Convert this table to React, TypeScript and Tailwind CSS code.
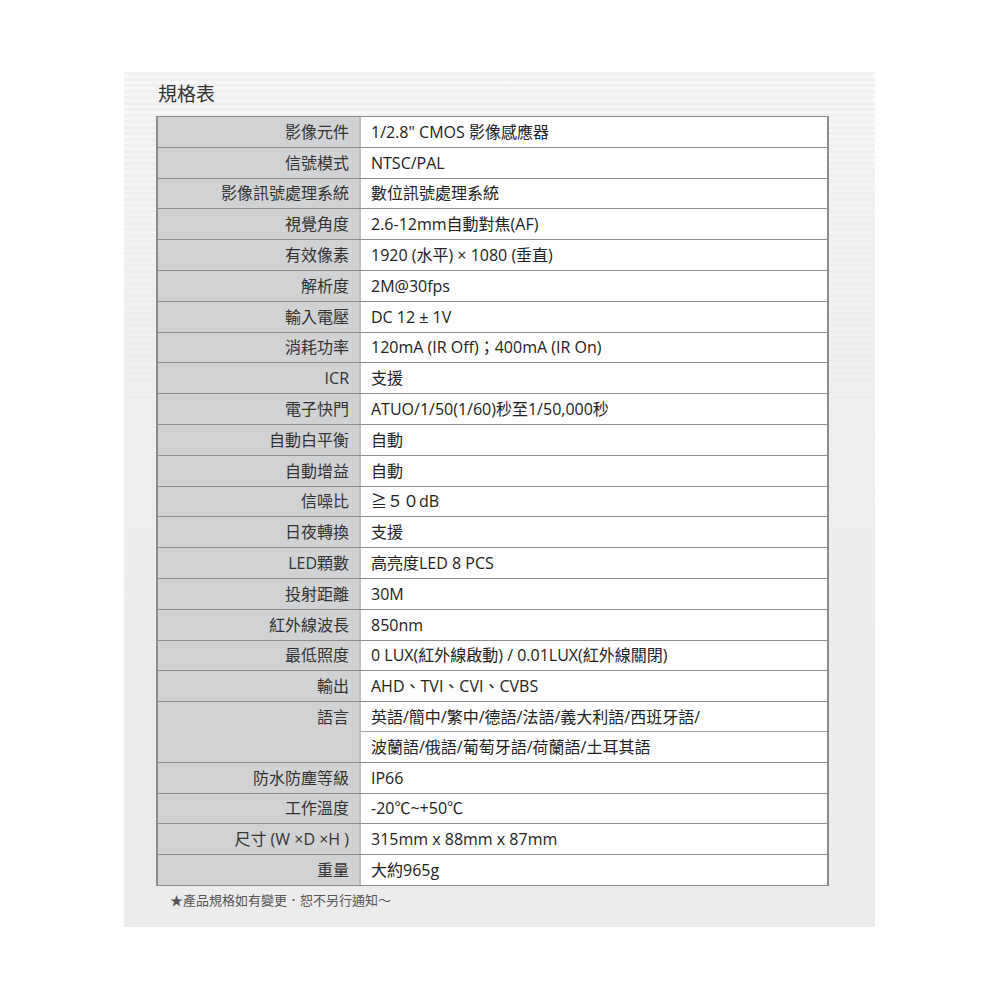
import React from "react";

type Row = { label: string; values: string[] };

const rows: Row[] = [
  { label: "影像元件", values: ['1/2.8" CMOS 影像感應器'] },
  { label: "信號模式", values: ["NTSC/PAL"] },
  { label: "影像訊號處理系統", values: ["數位訊號處理系統"] },
  { label: "視覺角度", values: ["2.6-12mm自動對焦(AF)"] },
  { label: "有效像素", values: ["1920 (水平) × 1080 (垂直)"] },
  { label: "解析度", values: ["2M@30fps"] },
  { label: "輸入電壓", values: ["DC 12 ± 1V"] },
  { label: "消耗功率", values: ["120mA (IR Off)；400mA (IR On)"] },
  { label: "ICR", values: ["支援"] },
  { label: "電子快門", values: ["ATUO/1/50(1/60)秒至1/50,000秒"] },
  { label: "自動白平衡", values: ["自動"] },
  { label: "自動增益", values: ["自動"] },
  { label: "信噪比", values: ["≧５０dB"] },
  { label: "日夜轉換", values: ["支援"] },
  { label: "LED顆數", values: ["高亮度LED 8 PCS"] },
  { label: "投射距離", values: ["30M"] },
  { label: "紅外線波長", values: ["850nm"] },
  { label: "最低照度", values: ["0 LUX(紅外線啟動) / 0.01LUX(紅外線關閉)"] },
  { label: "輸出", values: ["AHD、TVI、CVI、CVBS"] },
  {
    label: "語言",
    values: [
      "英語/簡中/繁中/德語/法語/義大利語/西班牙語/",
      "波蘭語/俄語/葡萄牙語/荷蘭語/土耳其語",
    ],
  },
  { label: "防水防塵等級", values: ["IP66"] },
  { label: "工作溫度", values: ["-20℃~+50℃"] },
  { label: "尺寸 (W ×D ×H )", values: ["315mm x 88mm x 87mm"] },
  { label: "重量", values: ["大約965g"] },
];

const SpecRow = ({ row, last }: { row: Row; last: boolean }) => {
  return (
    <div className={`flex ${last ? "" : "border-b border-[#8c8c8c]"}`}>
      <div className="w-[203px] shrink-0 bg-[#d1d2d4] border-r-2 border-[#bdbdbd] flex justify-end items-start pr-[10px]">
        <div className="h-[29.8px] flex items-center text-[#333]">
          {row.label}
        </div>
      </div>
      <div className="flex-1 flex flex-col bg-white">
        {row.values.map((v, i) => (
          <div
            key={i}
            className={`h-[29.8px] flex items-center pl-[10px] text-[#222] ${
              i < row.values.length - 1 ? "border-b border-[#a8a8a8]" : ""
            }`}
          >
            {v}
          </div>
        ))}
      </div>
    </div>
  );
};

export default function App() {
  return (
    <div className="w-[1000px] h-[1000px] bg-white pt-[72px] pl-[124px] font-['Open_Sans','Noto_Sans_CJK_TC',sans-serif]">
      <div className="w-[751px] h-[855px] pl-[32px] pt-[8px] bg-[linear-gradient(to_bottom,rgba(236,236,236,0)_0%,rgba(236,236,236,0.6)_30%,#ececec_70%),repeating-linear-gradient(to_bottom,#f1f1f1_0px,#f1f1f1_3px,#f8f8f8_3px,#f8f8f8_6px)]">
        <div className="pl-[2px] text-[19px] leading-[28px] text-[#333]">
          規格表
        </div>
        <div className="mt-[8px] w-[673px] border border-[#8c8c8c] border-l-2 border-r-2 text-[16px] leading-[20px]">
          {rows.map((r, i) => (
            <SpecRow key={i} row={r} last={i === rows.length - 1} />
          ))}
        </div>
        <div className="pl-[14px] pt-[4px] text-[13px] leading-[20px] text-[#555]">
          ★產品規格如有變更．恕不另行通知～
        </div>
      </div>
    </div>
  );
}
